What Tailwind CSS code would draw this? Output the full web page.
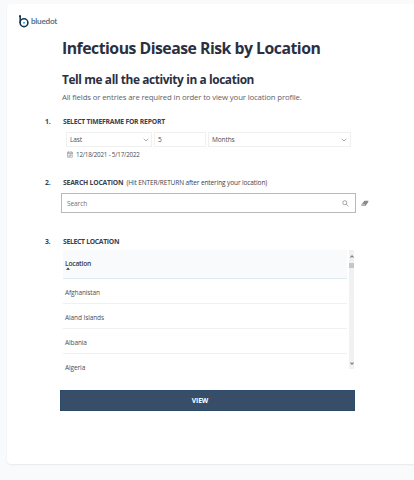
<!DOCTYPE html>
<html lang="en">
<head>
<meta charset="utf-8">
<title>Infectious Disease Risk by Location</title>
<script src="https://cdn.jsdelivr.net/npm/@tailwindcss/browser@4"></script>
</head>
<body class="h-[480px] overflow-hidden bg-[#f8fafc] pl-[7px] pt-[4px] font-['Open_Sans','Noto_Sans',sans-serif] text-[#4a4d58]">
<main class="flex h-[460px] w-[420px] flex-col rounded-[4px] bg-white shadow-[0_1px_2px_rgba(0,0,0,0.07)] whitespace-nowrap">
  <header class="flex h-[33px] items-center pl-[12px] pt-[1px]">
    <svg class="h-[13px] w-[10px]" viewBox="0 0 10 13" fill="none" stroke="#183852" stroke-width="1.6"><path d="M0 1.1H1.2V8"/><circle cx="5" cy="7.7" r="3.9"/><circle cx="5" cy="7.7" r="1" fill="#3ba9dc" stroke="none"/></svg>
    <span class="ml-[2px] font-['Lato','Open_Sans',sans-serif] text-[8.2px] leading-[12px] font-semibold tracking-[-0.25px] text-[#4d6478]">bluedot</span>
  </header>
  <section class="flex h-[67px] flex-col pl-[55px]">
    <h1 class="h-[22px] text-[15.8px] leading-[22px] font-bold tracking-[-0.5px] text-[#2b3041]"><span>Infectious Disease Risk by Location</span></h1>
    <h2 class="mt-[12px] h-[17px] text-[11.9px] leading-[17px] font-bold tracking-[-0.4px] text-[#2b3041]"><span>Tell me all the activity in a location</span></h2>
    <p class="mt-[3px] h-[12px] text-[7.8px] leading-[12px] tracking-[-0.15px] text-[#606266]"><span>All fields or entries are required in order to view your location profile.</span></p>
  </section>
  <section class="mt-[12px] flex h-[49px] flex-col">
    <h3 class="flex h-[12px] items-center pl-[38px] text-[6.8px] leading-[12px] font-bold tracking-[-0.24px] text-[#3d404d]"><span class="w-[18px]">1.</span><span>SELECT TIMEFRAME FOR REPORT</span></h3>
    <div class="mt-[4px] ml-[59px] flex h-[15px] gap-[2px] text-[6.5px] tracking-[-0.1px]">
      <div class="flex w-[86px] items-center justify-between border border-[#f0f0f0] pl-[3px] pr-[2px] pt-[1px]"><span>Last</span><svg class="h-[4px] w-[6px]" viewBox="0 0 6 4" fill="none" stroke="#888" stroke-width=".7"><path d="M.7.7 3 3 5.3.7"/></svg></div>
      <div class="flex w-[52px] items-center border border-[#f0f0f0] pl-[3px] pt-[1px]"><span>5</span></div>
      <div class="flex w-[143px] items-center justify-between border border-[#f0f0f0] pl-[3px] pr-[3px] pt-[1px]"><span>Months</span><svg class="h-[4px] w-[6px]" viewBox="0 0 6 4" fill="none" stroke="#888" stroke-width=".7"><path d="M.7.7 3 3 5.3.7"/></svg></div>
    </div>
    <div class="mt-[2px] ml-[60px] flex h-[11px] items-center gap-[3px] text-[6.3px] leading-[11px] tracking-[-0.22px]">
      <svg class="h-[7px] w-[6px]" viewBox="0 0 6 7" fill="none" stroke="#85878c" stroke-width=".6"><path d="M3 6.2H.4V1.2H5.5V3.5M.4 2.5H5.5M1.6.4V1.8M4.2.4V1.8M1.4 4H4.5M1.4 5.1H3"/><circle cx="4.4" cy="5.3" r="1.2"/></svg>
      <span>12/18/2021 - 5/17/2022</span>
    </div>
  </section>
  <section class="mt-[12px] flex h-[36px] flex-col">
    <h3 class="flex h-[12px] items-center pl-[38px] text-[6.8px] leading-[12px] font-bold tracking-[-0.21px] text-[#3d404d]"><span class="w-[18px]">2.</span><span class="w-[63.5px]">SEARCH LOCATION</span><span class="text-[6.5px] font-normal tracking-[-0.11px]">(Hit ENTER/RETURN after entering your location)</span></h3>
    <div class="mt-[4px] flex h-[20px] items-center pl-[54px]">
      <div class="flex h-[20px] w-[295px] items-center justify-between border border-[#b9b9b9] pl-[5px] pr-[6px] pt-[1px] text-[6.6px] tracking-[-0.12px] text-[#707176]"><span>Search</span><svg class="h-[7px] w-[7px]" viewBox="0 0 7 7" fill="none" stroke="#777" stroke-width=".65"><circle cx="2.8" cy="2.7" r="2"/><path d="m4.3 4.2 2.2 2.2"/></svg></div>
      <svg class="ml-[5px] h-[7px] w-[8px]" viewBox="0 0 8 7"><path d="M3.4.7H7.3V2L4.4 5.9H.5V4.5Z" fill="#8a8a8a"/><path d="M1 4.5H3.9V5.3H1Z" fill="#fff"/></svg>
    </div>
  </section>
  <section class="mt-[23px] flex h-[133px] flex-col">
    <h3 class="flex h-[12px] items-center pl-[38px] text-[6.8px] leading-[12px] font-bold tracking-[-0.3px] text-[#3d404d]"><span class="w-[18px]">3.</span><span>SELECT LOCATION</span></h3>
    <div class="mt-[2px] ml-[56px] flex h-[119px] gap-[2px]">
      <div class="w-[284px] text-[6.5px] tracking-[-0.1px]">
        <div class="flex h-[29px] flex-col border-b border-[#e0eaf1] bg-[#f8fafc] pl-[2px] pt-[8px] text-[6.7px] leading-[11px] font-semibold tracking-[-0.2px] text-[#353844]"><span>Location</span><svg class="-mt-[2px] ml-px h-[3px] w-[4px]" viewBox="0 0 4 3"><path d="m2 .6 2 2.1H0Z" fill="#333"/></svg></div>
        <div class="flex h-[25px] items-center border-b border-[#f0f0f1] pl-[2px] pt-[3px]"><span>Afghanistan</span></div>
        <div class="flex h-[25px] items-center border-b border-[#f0f0f1] pl-[2px] pt-[3px]"><span>Aland Islands</span></div>
        <div class="flex h-[25px] items-center border-b border-[#f0f0f1] pl-[2px] pt-[3px]"><span>Albania</span></div>
        <div class="flex h-[25px] items-center pl-[2px] pt-[2px]"><span>Algeria</span></div>
      </div>
      <div class="flex w-[5px] flex-col items-center bg-[#f1f1f1] pt-[5px] pb-[4px]">
        <svg class="h-[3px] w-[4px]" viewBox="0 0 4 3"><path d="m2 0 2 2.3-.8.5L2 1.8.8 2.8 0 2.3Z" fill="#777"/></svg>
        <div class="mt-[5px] h-[5px] w-[5px] bg-[#c6c6c6]"></div>
        <svg class="mt-auto h-[3px] w-[4px]" viewBox="0 0 4 3"><path d="m2 3 2-2.3L3.2.2 2 1.2.8.2 0 .7Z" fill="#777"/></svg>
      </div>
    </div>
  </section>
  <button class="mt-[21px] ml-[53px] flex h-[20.5px] w-[295px] items-center justify-center border border-[#2c4b6b] bg-[#374d68] pr-[15px] pt-[1px] text-[6.7px] font-bold tracking-[-0.1px] text-white">VIEW</button>
</main>
</body>
</html>
